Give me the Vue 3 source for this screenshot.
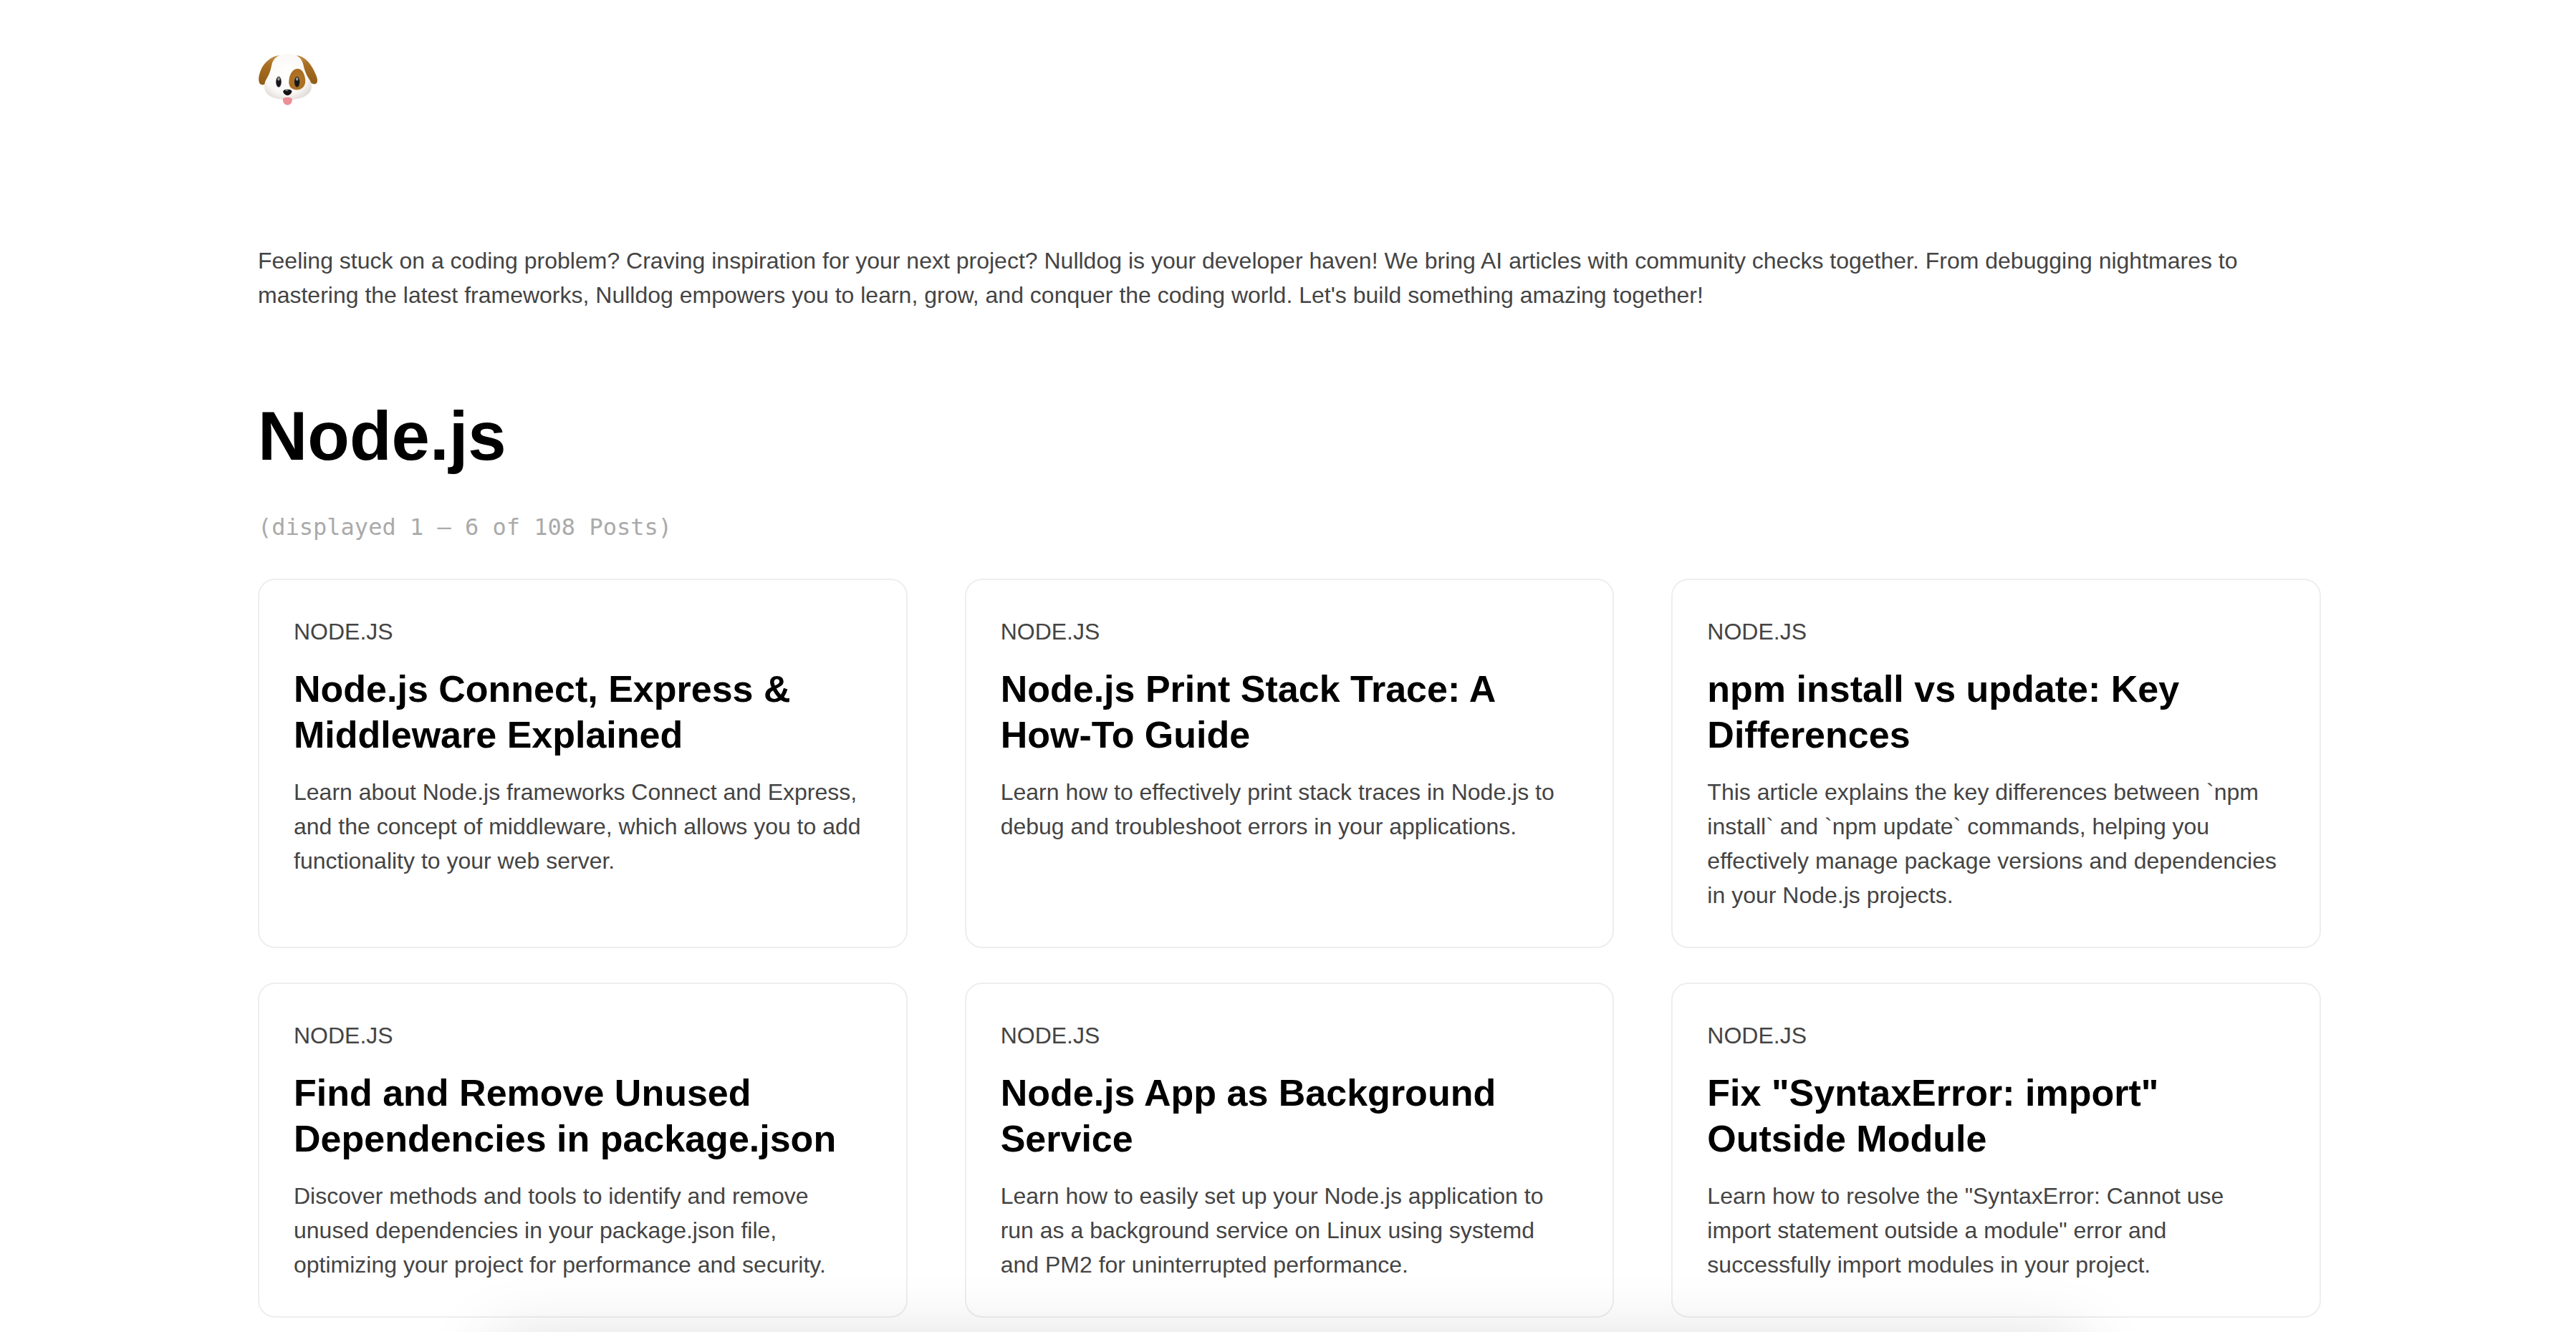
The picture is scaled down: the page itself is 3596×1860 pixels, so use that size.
<template>
  <div class="page">
    <header class="top">
      <svg class="logo" viewBox="63 72 252 222" width="84" height="74">
        <defs>
          <radialGradient id="head" gradientUnits="userSpaceOnUse" cx="180" cy="155" r="145">
            <stop offset="0" stop-color="#ffffff" />
            <stop offset="0.6" stop-color="#faf8f6" />
            <stop offset="1" stop-color="#d2cbc5" />
          </radialGradient>
          <linearGradient id="ear" x1="0" y1="0" x2="0" y2="1">
            <stop offset="0" stop-color="#c29352" />
            <stop offset="0.3" stop-color="#a96f22" />
            <stop offset="1" stop-color="#8f5c16" />
          </linearGradient>
          <radialGradient id="patch" cx="50%" cy="55%" r="60%">
            <stop offset="0" stop-color="#b4762a" />
            <stop offset="1" stop-color="#a86c1e" />
          </radialGradient>
        </defs>
        <path d="M150 82C118 84 84 112 72 145 62 170 60 192 70 202c9 8 24 2 36-12l34-70z" fill="url(#ear)" />
        <path d="M222 82c30 2 56 30 72 62 12 24 20 44 12 54-8 9-22 3-32-8l-30-70z" fill="url(#ear)" />
        <path d="M185 75C150 75 124 90 117 125 112 150 106 165 95 182 80 208 86 240 115 255c20 10 45 13 70 13 30 0 60-6 77-18 26-15 30-45 12-70-11-15-19-35-24-60C243 90 220 75 185 75z" fill="url(#head)" />
        <path d="M225 138C205 140 192 160 190 190c-2 25 15 40 40 36 20-4 32-21 28-46-3-25-15-43-33-42z" fill="url(#patch)" />
        <ellipse cx="147" cy="193" rx="12" ry="23" fill="#6f6f72" />
        <ellipse cx="147" cy="193" rx="10" ry="21" fill="#17171a" />
        <ellipse cx="147" cy="181" rx="5" ry="7" fill="#9c9ca0" />
        <ellipse cx="224" cy="193" rx="12" ry="23" fill="#5c4a35" />
        <ellipse cx="224" cy="193" rx="10" ry="21" fill="#17171a" />
        <ellipse cx="224" cy="181" rx="5" ry="7" fill="#9c9ca0" />
        <path d="M165 264c3-8 35-8 38 0 2 13-5 26-19 26-12 0-21-12-19-26z" fill="#ec8d98" />
        <path d="M166 232c2-10 34-10 36 0 2 8-10 18-18 18s-20-10-18-18z" fill="#141416" />
        <ellipse cx="181" cy="229" rx="7" ry="3" fill="#77777a" />
      </svg>
    </header>

    <p class="intro">Feeling stuck on a coding problem? Craving inspiration for your next project? Nulldog is your developer haven! We bring AI articles with community checks together. From debugging nightmares to mastering the latest frameworks, Nulldog empowers you to learn, grow, and conquer the coding world. Let's build something amazing together!</p>

    <h1 class="title">Node.js</h1>
    <p class="count">(displayed 1 – 6 of 108 Posts)</p>

    <div class="grid">
      <article v-for="post in posts" :key="post.title" class="card">
        <div class="tag">NODE.JS</div>
        <h2>{{ post.title }}</h2>
        <p>{{ post.text }}</p>
      </article>
    </div>

    <div class="floating"></div>
  </div>
</template>

<script setup>
const posts = [
  {
    title: 'Node.js Connect, Express & Middleware Explained',
    text: 'Learn about Node.js frameworks Connect and Express, and the concept of middleware, which allows you to add functionality to your web server.'
  },
  {
    title: 'Node.js Print Stack Trace: A How-To Guide',
    text: 'Learn how to effectively print stack traces in Node.js to debug and troubleshoot errors in your applications.'
  },
  {
    title: 'npm install vs update: Key Differences',
    text: 'This article explains the key differences between `npm install` and `npm update` commands, helping you effectively manage package versions and dependencies in your Node.js projects.'
  },
  {
    title: 'Find and Remove Unused Dependencies in package.json',
    text: 'Discover methods and tools to identify and remove unused dependencies in your package.json file, optimizing your project for performance and security.'
  },
  {
    title: 'Node.js App as Background Service',
    text: 'Learn how to easily set up your Node.js application to run as a background service on Linux using systemd and PM2 for uninterrupted performance.'
  },
  {
    title: 'Fix "SyntaxError: import" Outside Module',
    text: 'Learn how to resolve the "SyntaxError: Cannot use import statement outside a module" error and successfully import modules in your project.'
  }
]
</script>

<style>
html,
body {
  margin: 0;
  background: #fff;
  overflow: hidden;
}
</style>

<style scoped>
.page {
  position: relative;
  height: 1860px;
  overflow: hidden;
  padding: 0 356px 0 360px;
  font-family: "Liberation Sans", Arial, sans-serif;
  color: #444;
}

.top {
  height: 216px;
  padding-top: 74px;
  box-sizing: border-box;
}

.logo {
  display: block;
  margin-left: 1px;
}

.intro {
  margin: 124px 0 0;
  font-size: 32px;
  line-height: 48px;
}

.title {
  margin: 113px 0 0;
  font-size: 96px;
  line-height: 120px;
  font-weight: 700;
  color: #000;
}

.count {
  margin: 43px 0 0;
  font-family: "DejaVu Sans Mono", monospace;
  font-size: 32px;
  line-height: 48px;
  color: #aaa;
}

.grid {
  display: grid;
  grid-template-columns: repeat(3, 1fr);
  gap: 48px 80px;
  margin-top: 48px;
}

.card {
  box-sizing: border-box;
  border: 2px solid #eee;
  border-radius: 24px;
  padding: 48px;
}

.tag {
  font-size: 32px;
  line-height: 48px;
}

.card h2 {
  margin: 24px 0 0;
  font-size: 52px;
  line-height: 64px;
  color: #000;
}

.card p {
  margin: 24px 0 0;
  font-size: 32px;
  line-height: 48px;
}

.floating {
  position: absolute;
  left: 690px;
  right: 690px;
  top: 1880px;
  height: 80px;
  box-shadow: 0 0 100px rgba(0, 0, 0, 0.18);
}
</style>
